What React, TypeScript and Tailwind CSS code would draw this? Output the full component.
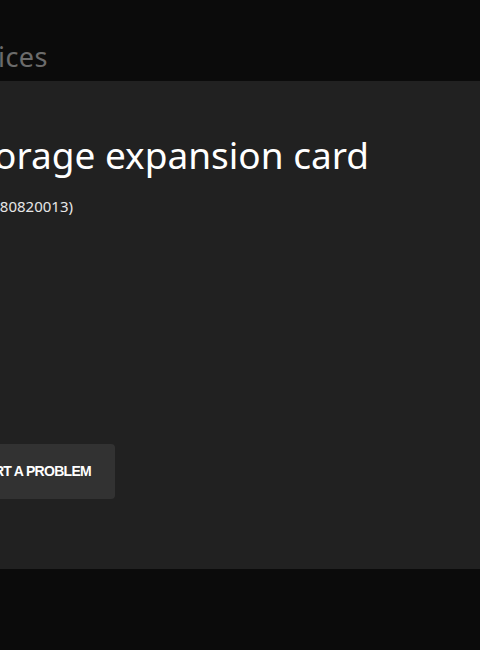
export default function App() {
  return (
    <div className="w-[480px] h-[650px] bg-[#0b0b0b] overflow-hidden flex flex-col" style={{ fontFamily: '"Noto Sans", "Open Sans", sans-serif' }}>
      <div className="h-[81px] shrink-0 flex items-end pb-[4px] overflow-hidden">
        <div className="flex justify-end w-[200px] ml-[-152px]">
          <span className="text-[27px] text-[#6b6b6b] whitespace-nowrap tracking-[0.5px]">Devices</span>
        </div>
      </div>
      <div className="h-[488px] shrink-0 bg-[#212121] flex flex-col overflow-hidden">
        <div className="flex justify-end w-[700px] ml-[-331px] mt-[48px]">
          <h1 className="text-[37px] text-white whitespace-nowrap leading-[52px]">Storage expansion card</h1>
        </div>
        <div className="flex justify-end w-[300px] ml-[-227px] mt-[14px]">
          <p className="text-[15px] text-[#e6e6e6] whitespace-nowrap">(0x80820013)</p>
        </div>
        <div className="flex justify-end w-[300px] ml-[-185px] mt-[226px]">
          <button className="h-[55px] w-[200px] rounded-[4px] bg-[#323232] text-white text-[14px] font-bold tracking-[-0.7px] flex items-center justify-end pr-[24px]" style={{ fontFamily: '"Liberation Sans", "DejaVu Sans", sans-serif' }}>
            REPORT A PROBLEM
          </button>
        </div>
      </div>
    </div>
  );
}
